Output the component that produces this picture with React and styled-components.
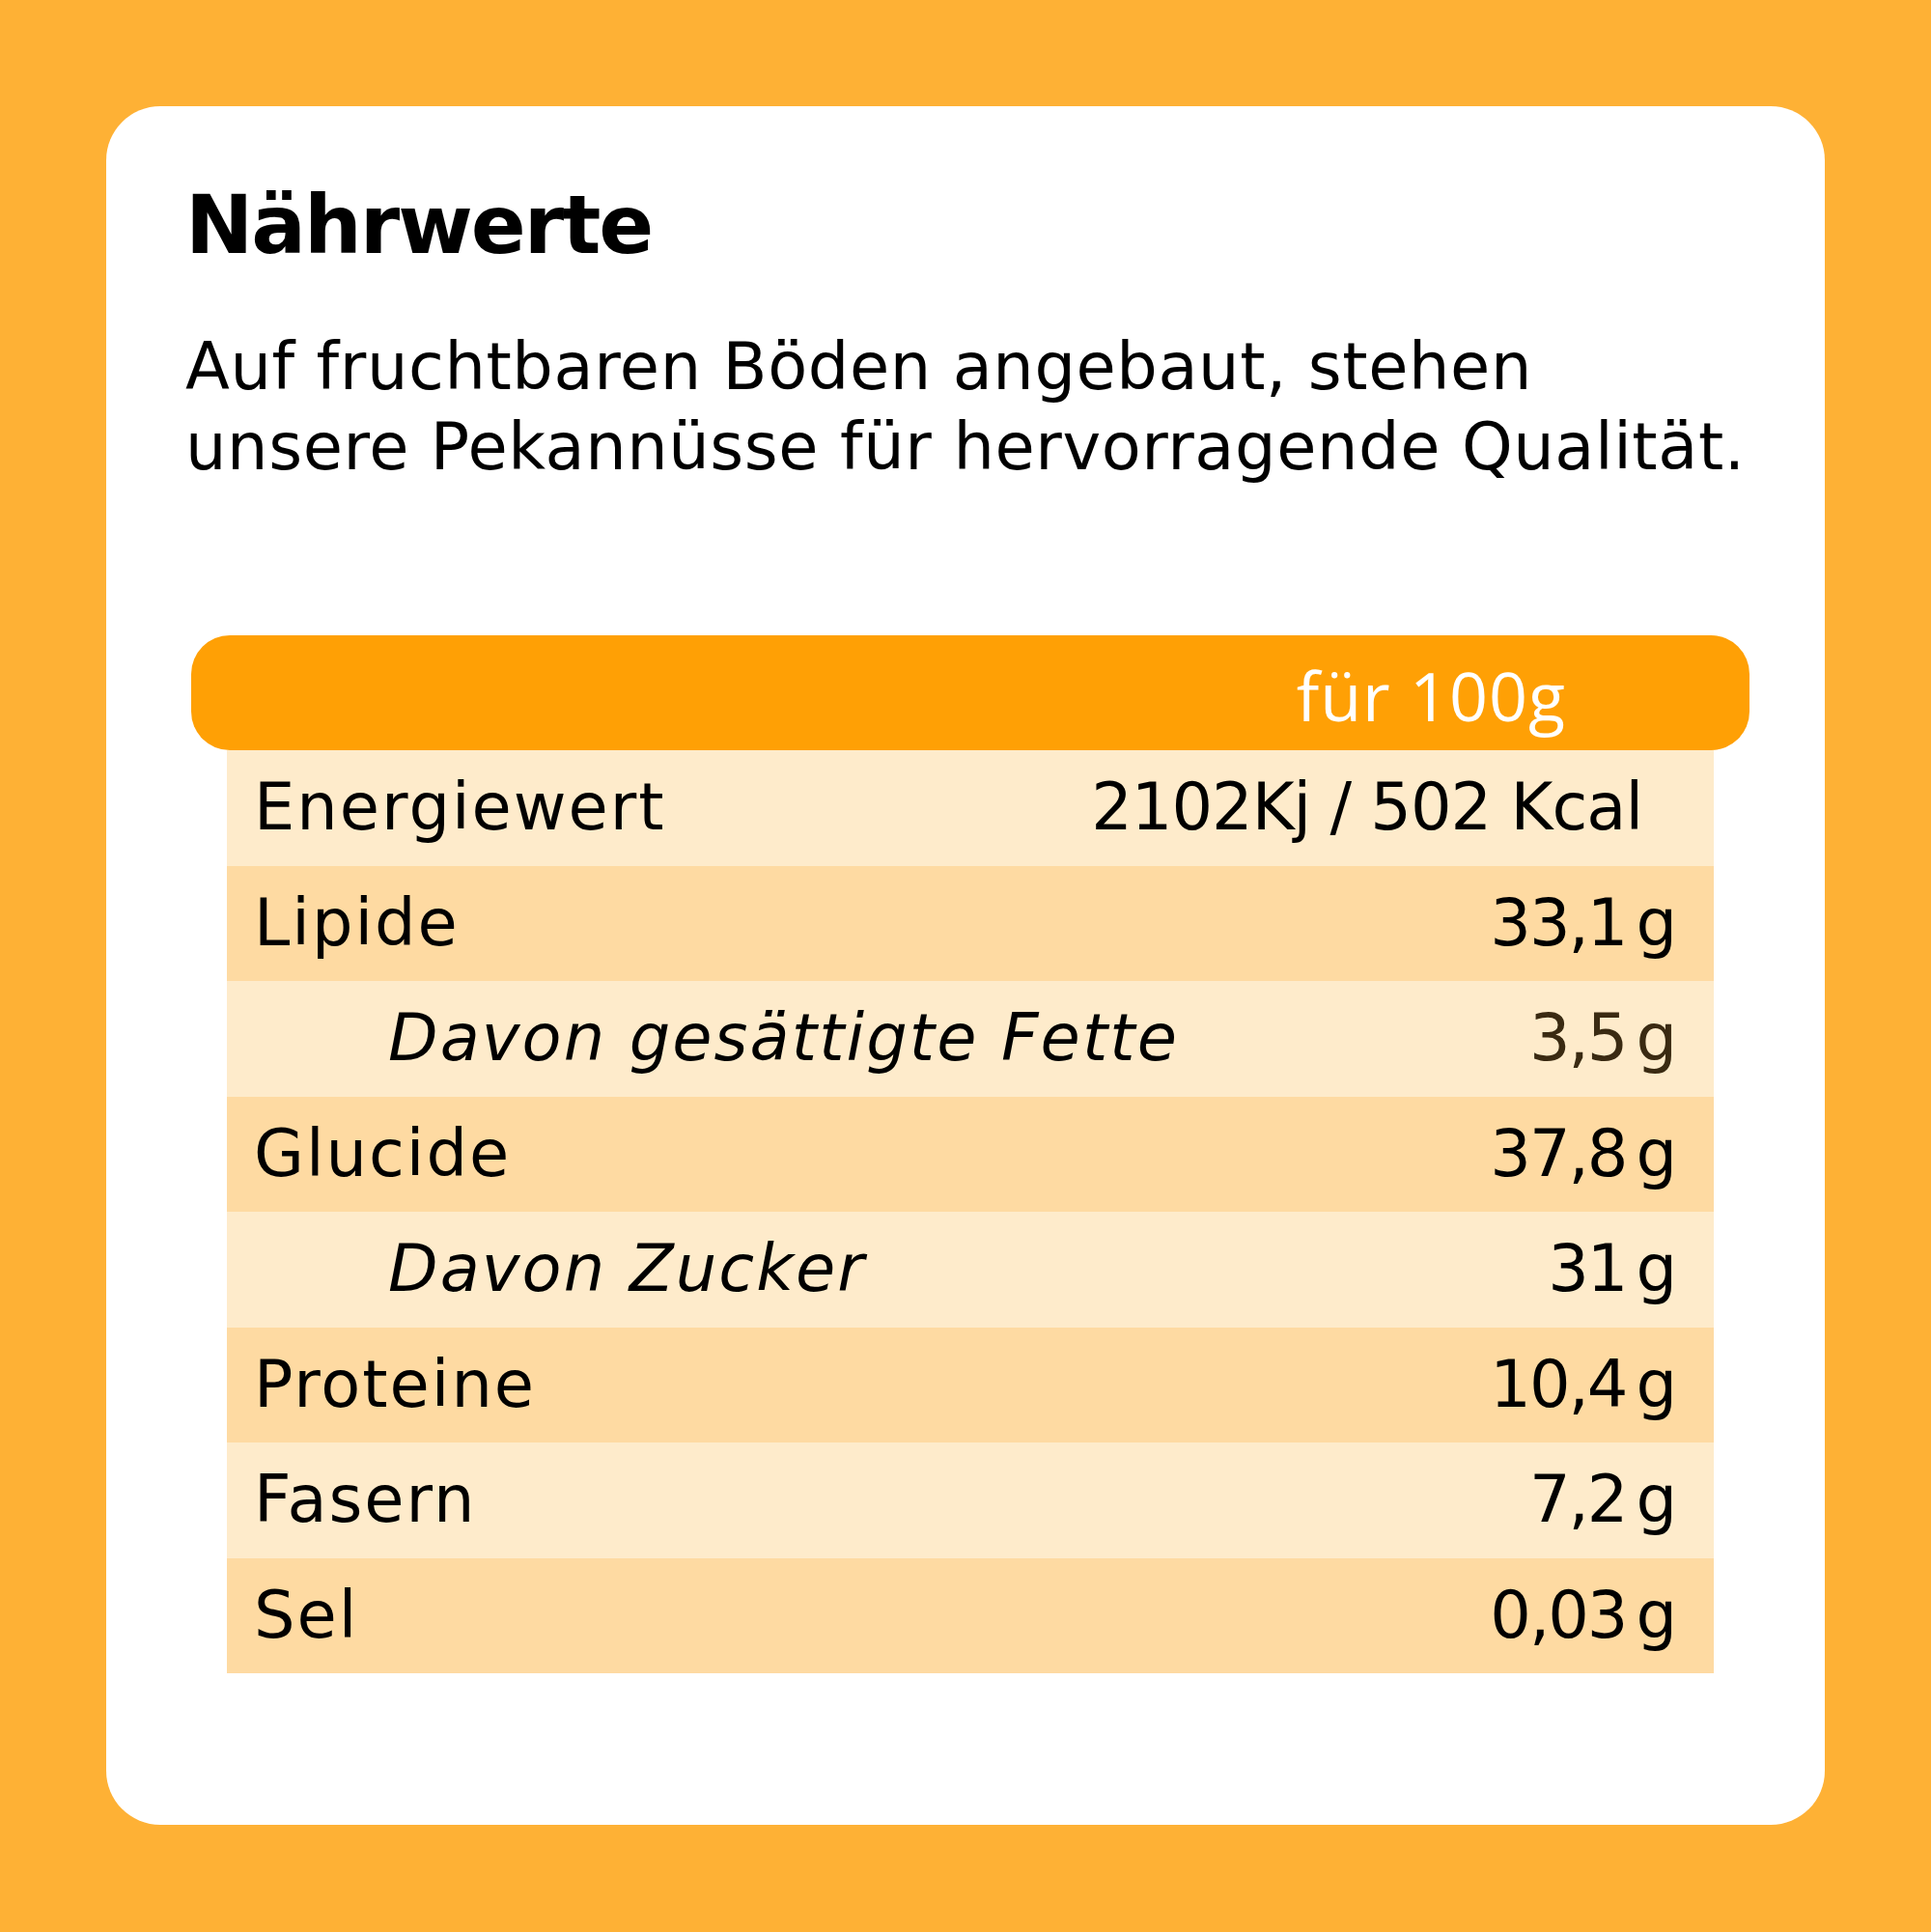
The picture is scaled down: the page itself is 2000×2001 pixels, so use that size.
import React from "react";
import styled, { createGlobalStyle } from "styled-components";

const GlobalStyle = createGlobalStyle`
  html, body {
    margin: 0;
    padding: 0;
    background: #feb135;
  }
  body {
    font-family: "DejaVu Sans", "Open Sans", sans-serif;
    color: #000;
  }
`;

const Page = styled.div`
  width: 2000px;
  height: 2001px;
  box-sizing: border-box;
  padding: 110px;
  background: #feb135;
`;

const Card = styled.section`
  width: 1780px;
  height: 1780px;
  box-sizing: border-box;
  background: #ffffff;
  border-radius: 56px;
  padding: 81px 78px 0 82px;
  display: flex;
  flex-direction: column;
`;

const Title = styled.h1`
  margin: 0;
  font-size: 84px;
  line-height: 84px;
  font-weight: 700;
  letter-spacing: -2px;
  white-space: nowrap;
`;

const Intro = styled.p`
  margin: 64px 0 0;
  font-size: 67px;
  line-height: 83px;
  font-weight: 400;
  letter-spacing: 0.6px;
  white-space: nowrap;
`;

const Table = styled.div`
  margin: 153px 0 0 6px;
  display: flex;
  flex-direction: column;
`;

const HeaderBar = styled.div`
  height: 119px;
  border-radius: 40px;
  background: #ffa005;
  display: flex;
  align-items: center;
  justify-content: flex-end;
  padding-right: 190px;
`;

const HeaderText = styled.span`
  color: #ffffff;
  font-family: "Open Sans", "DejaVu Sans", sans-serif;
  font-size: 70px;
  line-height: 1;
  font-weight: 400;
  letter-spacing: 1px;
  white-space: nowrap;
  transform: translateY(2px);
`;

const Rows = styled.div`
  margin: 0 37px;
  display: flex;
  flex-direction: column;
`;

const Row = styled.div`
  height: 119.5px;
  display: flex;
  align-items: center;
  justify-content: space-between;
  background: ${(p) => (p.$dark ? "#fedaa2" : "#feebcb")};
  padding: 0 ${(p) => p.$padRight}px 0 ${(p) => (p.$indent ? 167 : 28)}px;
  box-sizing: border-box;
`;

const Label = styled.span`
  font-size: 67px;
  line-height: 1;
  font-style: ${(p) => (p.$italic ? "italic" : "normal")};
  letter-spacing: ${(p) => (p.$italic ? "2.1px" : "2px")};
  white-space: nowrap;
`;

const Value = styled.span`
  font-size: 67px;
  line-height: 1;
  color: ${(p) => p.$tone || "#000"};
  letter-spacing: ${(p) => (p.$raw ? "-1px" : "-2px")};
  white-space: nowrap;
`;

const Unit = styled.span`
  margin-left: 10px;
  letter-spacing: 0;
`;

const data = [
  { label: "Energiewert", value: "2102Kj / 502 Kcal", raw: true, pad: 74 },
  { label: "Lipide", value: "33,1" },
  { label: "Davon gesättigte Fette", value: "3,5", indent: true, tone: "#3a2a12" },
  { label: "Glucide", value: "37,8" },
  { label: "Davon Zucker", value: "31", indent: true },
  { label: "Proteine", value: "10,4" },
  { label: "Fasern", value: "7,2" },
  { label: "Sel", value: "0,03" },
];

export default function App() {
  return (
    <Page>
      <GlobalStyle />
      <Card>
        <Title>Nährwerte</Title>
        <Intro>
          Auf fruchtbaren Böden angebaut, stehen
          <br />
          unsere Pekannüsse für hervorragende Qualität.
        </Intro>
        <Table>
          <HeaderBar>
            <HeaderText>für 100g</HeaderText>
          </HeaderBar>
          <Rows>
            {data.map((d, i) => (
              <Row key={d.label} $dark={i % 2 === 1} $indent={d.indent} $padRight={d.pad || 38}>
                <Label $italic={d.indent}>{d.label}</Label>
                <Value $tone={d.tone} $raw={d.raw}>
                  {d.raw ? (
                    d.value
                  ) : (
                    <>
                      {d.value}
                      <Unit>g</Unit>
                    </>
                  )}
                </Value>
              </Row>
            ))}
          </Rows>
        </Table>
      </Card>
    </Page>
  );
}
